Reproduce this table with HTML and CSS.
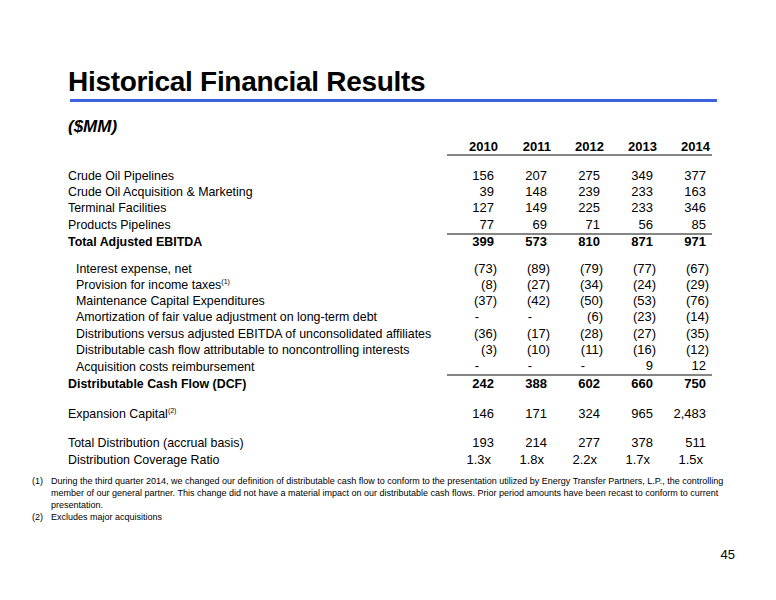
FILE: index.html
```html
<!DOCTYPE html>
<html lang="en">
<head>
  <meta charset="UTF-8" />
  <title>Historical Financial Results</title>
  <link rel="stylesheet" href="styles.css">
</head>
<body>
  <div class="slide">
    <h1>Historical Financial Results</h1>
    <div class="rule"></div>
    <div class="units">($MM)</div>

    <table class="fin">
      <colgroup>
        <col class="label-col">
        <col class="num-col"><col class="num-col"><col class="num-col"><col class="num-col"><col class="num-col">
      </colgroup>
      <thead>
        <tr>
          <th></th>
          <th class="yr">2010</th><th class="yr">2011</th><th class="yr">2012</th><th class="yr">2013</th><th class="yr">2014</th>
        </tr>
      </thead>
      <tbody>
        <tr class="gap-top"><td colspan="6"></td></tr>
        <tr><td>Crude Oil Pipelines</td><td class="n">156</td><td class="n">207</td><td class="n">275</td><td class="n">349</td><td class="n">377</td></tr>
        <tr><td>Crude Oil Acquisition &amp; Marketing</td><td class="n">39</td><td class="n">148</td><td class="n">239</td><td class="n">233</td><td class="n">163</td></tr>
        <tr><td>Terminal Facilities</td><td class="n">127</td><td class="n">149</td><td class="n">225</td><td class="n">233</td><td class="n">346</td></tr>
        <tr><td>Products Pipelines</td><td class="n">77</td><td class="n">69</td><td class="n">71</td><td class="n">56</td><td class="n">85</td></tr>
        <tr class="total"><td>Total Adjusted EBITDA</td><td class="n">399</td><td class="n">573</td><td class="n">810</td><td class="n">871</td><td class="n">971</td></tr>

        <tr class="gap"><td colspan="6"></td></tr>
        <tr class="sub"><td>Interest expense, net</td><td class="p">(73)</td><td class="p">(89)</td><td class="p">(79)</td><td class="p">(77)</td><td class="p">(67)</td></tr>
        <tr class="sub"><td>Provision for income taxes<sup>(1)</sup></td><td class="p">(8)</td><td class="p">(27)</td><td class="p">(34)</td><td class="p">(24)</td><td class="p">(29)</td></tr>
        <tr class="sub"><td>Maintenance Capital Expenditures</td><td class="p">(37)</td><td class="p">(42)</td><td class="p">(50)</td><td class="p">(53)</td><td class="p">(76)</td></tr>
        <tr class="sub"><td>Amortization of fair value adjustment on long-term debt</td><td class="d">-</td><td class="d">-</td><td class="p">(6)</td><td class="p">(23)</td><td class="p">(14)</td></tr>
        <tr class="sub"><td>Distributions versus adjusted EBITDA of unconsolidated affiliates</td><td class="p">(36)</td><td class="p">(17)</td><td class="p">(28)</td><td class="p">(27)</td><td class="p">(35)</td></tr>
        <tr class="sub"><td>Distributable cash flow attributable to noncontrolling interests</td><td class="p">(3)</td><td class="p">(10)</td><td class="p">(11)</td><td class="p">(16)</td><td class="p">(12)</td></tr>
        <tr class="sub"><td>Acquisition costs reimbursement</td><td class="d">-</td><td class="d">-</td><td class="d">-</td><td class="n">9</td><td class="n">12</td></tr>
        <tr class="total dcf"><td>Distributable Cash Flow (DCF)</td><td class="n">242</td><td class="n">388</td><td class="n">602</td><td class="n">660</td><td class="n">750</td></tr>

        <tr class="gap wide"><td colspan="6"></td></tr>
        <tr><td>Expansion Capital<sup>(2)</sup></td><td class="n">146</td><td class="n">171</td><td class="n">324</td><td class="n">965</td><td class="n">2,483</td></tr>

        <tr class="gap mid"><td colspan="6"></td></tr>
        <tr><td>Total Distribution (accrual basis)</td><td class="n">193</td><td class="n">214</td><td class="n">277</td><td class="n">378</td><td class="n">511</td></tr>
        <tr><td>Distribution Coverage Ratio</td><td class="x">1.3x</td><td class="x">1.8x</td><td class="x">2.2x</td><td class="x">1.7x</td><td class="x">1.5x</td></tr>
      </tbody>
    </table>

    <div class="notes">
      <div class="note">
        <span class="note-num">(1)</span>
        <p>During the third quarter 2014, we changed our definition of distributable cash flow to conform to the presentation utilized by Energy Transfer Partners, L.P., the controlling member of our general partner. This change did not have a material impact on our distributable cash flows. Prior period amounts have been recast to conform to current presentation.</p>
      </div>
      <div class="note">
        <span class="note-num">(2)</span>
        <p>Excludes major acquisitions</p>
      </div>
    </div>

    <div class="page-num">45</div>
  </div>
</body>
</html>
```

FILE: styles.css
```css
html, body {
  margin: 0;
  padding: 0;
  background-color: #fff;
}

body {
  color: #000;
  font-family: "Liberation Sans", Arial, Helvetica, sans-serif;
}

.slide {
  width: 776px;
  height: 600px;
  padding-top: 66px;
  box-sizing: border-box;
}

h1 {
  margin: 0 0 0 68px;
  font-size: 28px;
  font-weight: bold;
  line-height: 32px;
  letter-spacing: -0.3px;
}

.rule {
  margin: 1px 59px 0 70px;
  height: 3px;
  background-color: #3b63df;
}

.units {
  margin: 15px 0 0 68px;
  font-size: 17px;
  font-weight: bold;
  font-style: italic;
  line-height: 20px;
}

/* financial table */
.fin {
  margin: 3px 0 0 68px;
  border-collapse: collapse;
  table-layout: fixed;
  width: 644px;
  font-size: 13px;
}

.label-col {
  width: 379px;
}

.num-col {
  width: 53px;
}

.fin td, .fin th {
  padding: 0;
  line-height: 16.2px;
  white-space: nowrap;
  text-align: left;
}

.fin td:first-child {
  font-size: 12.4px;
}

.fin th.yr {
  text-align: right;
  padding-right: 2px;
  line-height: 14px;
  font-weight: bold;
  border-bottom: 2px solid #858585;
}

.fin td.n, .fin td.p, .fin td.d, .fin td.x {
  text-align: right;
}

.fin td.n { padding-right: 6px; }
.fin td.p { padding-right: 3px; }
.fin td.d { padding-right: 21px; }
.fin td.x { padding-right: 9px; }

.fin .sub td:first-child {
  padding-left: 8px;
}

/* total rows: rule above the figures, label kept on the same line */
.fin .total td {
  font-weight: bold;
  line-height: 13px;
  padding-top: 2px;
  padding-bottom: 1px;
}

.fin .total td:not(:first-child) {
  padding-top: 0;
  border-top: 2px solid #858585;
}

.fin .dcf td {
  line-height: 14px;
}

.fin sup {
  font-size: 7px;
  line-height: 0;
  vertical-align: 5px;
}

.gap-top td { height: 12px; }
.gap td { height: 11px; }
.gap.wide td { height: 14px; }
.gap.mid td { height: 13px; }

/* footnotes */
.notes {
  margin: 7px 44px 0 32px;
  font-family: "Liberation Sans Narrow", "Arial Narrow", "Liberation Sans", sans-serif;
  font-size: 9px;
  line-height: 12px;
}

.note {
  display: flex;
}

.note-num {
  flex: 0 0 19px;
}

.note p {
  margin: 0;
  flex: 1;
}

.page-num {
  margin-top: 24px;
  padding-right: 41px;
  text-align: right;
  font-size: 13px;
}
```
